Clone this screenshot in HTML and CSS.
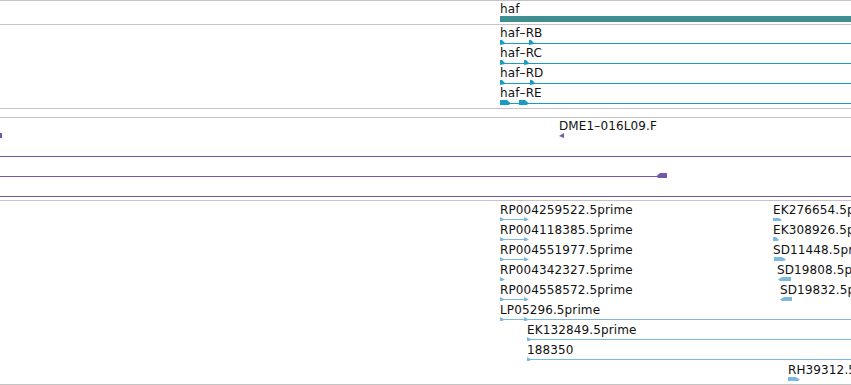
FILE: index.html
```html
<!DOCTYPE html>
<html lang="en">
<head>
    <meta charset="UTF-8">
    <title>haf region</title>
    <link rel="stylesheet" href="styles.css">
</head>
<body>
    <div class="view">
        <!-- gene -->
        <section class="track track-gene">
            <div class="row row-gene">
                <span class="label" style="left: 500px">haf</span>
                <div class="gene-bar"></div>
            </div>
        </section>

        <!-- transcripts -->
        <section class="track track-tx">
            <div class="row">
                <span class="label" style="left: 500px">haf&#8211;RB</span>
                <svg class="tx" width="851" height="20" viewBox="0 0 851 20">
                    <rect x="500" y="18" width="351" height="1"/>
                    <polygon points="500,15 502,15 505,18 505,19 500,20"/>
                    <polygon points="529,15 531,15 534,18 534,19 529,20"/>
                </svg>
            </div>
            <div class="row">
                <span class="label" style="left: 500px">haf&#8211;RC</span>
                <svg class="tx" width="851" height="20" viewBox="0 0 851 20">
                    <rect x="500" y="18" width="351" height="1"/>
                    <polygon points="500,15 502,15 505,18 505,19 500,20"/>
                    <polygon points="524,15 526,15 529,18 529,19 524,20"/>
                </svg>
            </div>
            <div class="row">
                <span class="label" style="left: 500px">haf&#8211;RD</span>
                <svg class="tx" width="851" height="20" viewBox="0 0 851 20">
                    <rect x="500" y="18" width="351" height="1"/>
                    <polygon points="500,15 502,15 505,18 505,19 500,20"/>
                    <polygon points="530,15 532,15 535,18 535,19 530,20"/>
                </svg>
            </div>
            <div class="row">
                <span class="label" style="left: 500px">haf&#8211;RE</span>
                <svg class="tx" width="851" height="20" viewBox="0 0 851 20">
                    <rect x="500" y="18" width="351" height="1"/>
                    <polygon points="500,15 507,15 511,18.5 507,21 500,21"/>
                    <polygon points="519,15 525,15 529,18.5 525,21 519,21"/>
                </svg>
            </div>
        </section>

        <section class="track track-empty"></section>

        <!-- ESTs -->
        <section class="track track-est">
            <div class="row">
                <span class="label" style="left: 559px">DME1&#8211;016L09.F</span>
                <svg class="est" width="851" height="20" viewBox="0 0 851 20">
                    <rect x="0" y="15" width="2" height="5"/>
                    <polygon points="564,15 564,20 559,18"/>
                </svg>
            </div>
            <div class="row">
                <svg class="est" width="851" height="20" viewBox="0 0 851 20">
                    <rect x="0" y="18" width="851" height="1"/>
                </svg>
            </div>
            <div class="row">
                <svg class="est" width="851" height="20" viewBox="0 0 851 20">
                    <rect x="0" y="18" width="660" height="1"/>
                    <polygon points="667,15 667,21 660,21 656,18.5 660,15"/>
                </svg>
            </div>
            <div class="row">
                <svg class="est" width="851" height="20" viewBox="0 0 851 20">
                    <rect x="0" y="18" width="851" height="1"/>
                </svg>
            </div>
        </section>

        <!-- 5' reads -->
        <section class="track track-rna">
            <div class="row">
                <span class="label" style="left: 500px">RP004259522.5prime</span>
                <span class="label" style="left: 773px">EK276654.5prime</span>
                <svg class="rna" width="851" height="20" viewBox="0 0 851 20">
                    <rect x="500" y="18" width="28" height="1"/>
                    <polygon points="500,16 505,18.5 500,21"/>
                    <polygon points="524,16 529,18.5 524,21"/>
                    <polygon points="773,17 779,17 782,19 779,21.5 773,21.5"/>
                </svg>
            </div>
            <div class="row">
                <span class="label" style="left: 500px">RP004118385.5prime</span>
                <span class="label" style="left: 773px">EK308926.5prime</span>
                <svg class="rna" width="851" height="20" viewBox="0 0 851 20">
                    <rect x="500" y="18" width="28" height="1"/>
                    <polygon points="500,16 505,18.5 500,21"/>
                    <polygon points="524,16 529,18.5 524,21"/>
                    <polygon points="773,16 776,16 779,19 776,21 773,21"/>
                </svg>
            </div>
            <div class="row">
                <span class="label" style="left: 500px">RP004551977.5prime</span>
                <span class="label" style="left: 773px">SD11448.5prime</span>
                <svg class="rna" width="851" height="20" viewBox="0 0 851 20">
                    <rect x="500" y="18" width="28" height="1"/>
                    <polygon points="500,16 505,18.5 500,21"/>
                    <polygon points="524,16 529,18.5 524,21"/>
                    <polygon points="774,16 782,16 786,18.5 782,21.5 774,21.5"/>
                </svg>
            </div>
            <div class="row">
                <span class="label" style="left: 500px">RP004342327.5prime</span>
                <span class="label" style="left: 777px">SD19808.5prime</span>
                <svg class="rna" width="851" height="20" viewBox="0 0 851 20">
                    <polygon points="500,16 505,18.5 500,21"/>
                    <polygon points="791,16 791,21.5 782,21.5 778,18.5 782,16"/>
                </svg>
            </div>
            <div class="row">
                <span class="label" style="left: 500px">RP004558572.5prime</span>
                <span class="label" style="left: 780px">SD19832.5prime</span>
                <svg class="rna" width="851" height="20" viewBox="0 0 851 20">
                    <rect x="500" y="18" width="28" height="1"/>
                    <polygon points="500,16 505,18.5 500,21"/>
                    <polygon points="524,16 529,18.5 524,21"/>
                    <polygon points="792,16 792,21.5 784,21.5 780,18.5 784,16"/>
                </svg>
            </div>
            <div class="row">
                <span class="label" style="left: 500px">LP05296.5prime</span>
                <svg class="rna" width="851" height="20" viewBox="0 0 851 20">
                    <rect x="500" y="18" width="351" height="1"/>
                    <polygon points="500,16 505,18.5 500,21"/>
                    <polygon points="524,16 529,18.5 524,21"/>
                </svg>
            </div>
            <div class="row">
                <span class="label" style="left: 527px">EK132849.5prime</span>
                <svg class="rna" width="851" height="20" viewBox="0 0 851 20">
                    <rect x="527" y="18" width="324" height="1"/>
                    <polygon points="527,16 532,18.5 527,21"/>
                </svg>
            </div>
            <div class="row">
                <span class="label" style="left: 527px">188350</span>
                <svg class="rna" width="851" height="20" viewBox="0 0 851 20">
                    <rect x="527" y="18" width="324" height="1"/>
                    <polygon points="527,16 532,18.5 527,21"/>
                </svg>
            </div>
            <div class="row">
                <span class="label" style="left: 788px">RH39312.5prime</span>
                <svg class="rna" width="851" height="20" viewBox="0 0 851 20">
                    <polygon points="788,16 796,16 800,18.5 796,21.5 788,21.5"/>
                </svg>
            </div>
        </section>
    </div>
</body>
</html>
```

FILE: styles.css
```css
:root {
    --grid-line: #c4c4c4;
    --gene: #3f8f90;
    --transcript: #1b9bc3;
    --est: #7557a9;
    --rna: #7cb9df;
}

body {
    margin: 0;
    background: #ffffff;
    font-family: "DejaVu Sans", sans-serif;
    font-size: 12px;
    color: #111111;
    overflow: hidden;
}

.view {
    width: 851px;
    height: 385px;
    overflow: hidden;
}

.track {
    border-top: 1px solid var(--grid-line);
}

.track-gene { height: 23px; }
.track-tx { height: 83px; }
.track-empty { height: 8px; }
.track-est { height: 82px; }

.track-rna {
    height: 183px;
    border-bottom: 1px solid var(--grid-line);
}

.row {
    position: relative;
    height: 20px;
}

.row-gene {
    height: 23px;
}

.row svg {
    position: absolute;
    left: 0;
    top: 0;
}

.label {
    position: absolute;
    top: 1px;
    line-height: 14px;
    letter-spacing: 0.12px;
    white-space: nowrap;
}

.track-rna .label {
    top: 2px;
}

/* gene span */
.gene-bar {
    position: absolute;
    left: 500px;
    right: 0;
    top: 15px;
    height: 6px;
    background: var(--gene);
}

.tx { fill: var(--transcript); }
.est { fill: var(--est); }
.rna { fill: var(--rna); }
```
